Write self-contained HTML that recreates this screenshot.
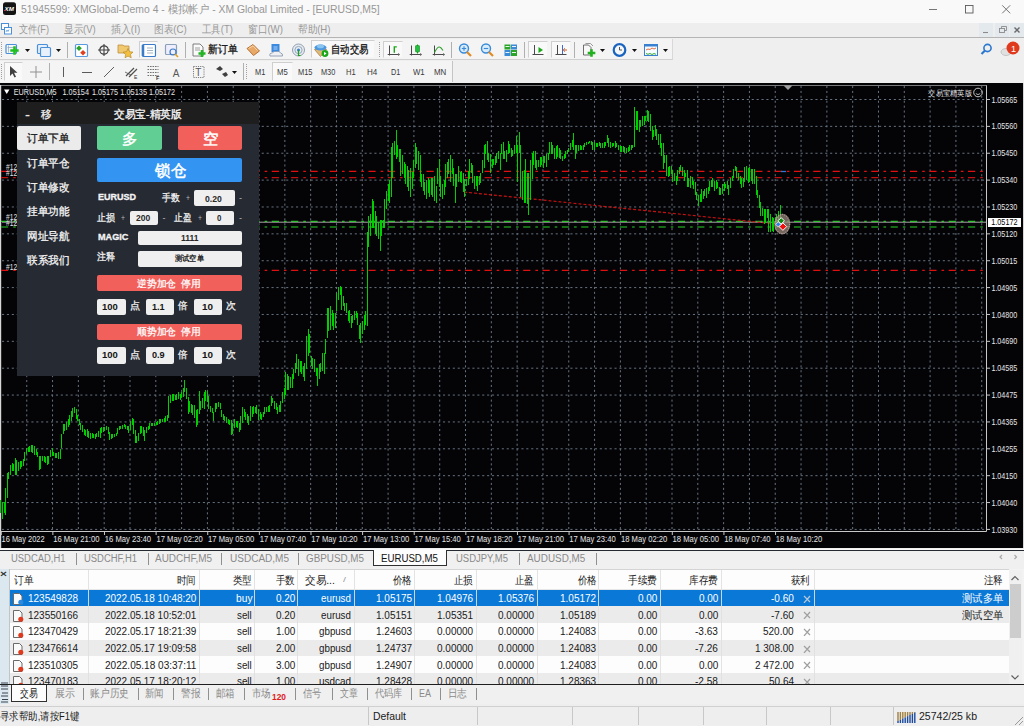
<!DOCTYPE html>
<html><head><meta charset="utf-8"><style>
*{margin:0;padding:0;box-sizing:border-box}
html,body{width:1024px;height:726px;overflow:hidden;background:#f0f0f0;font-family:"Liberation Sans",sans-serif;position:relative}
.a{position:absolute;white-space:nowrap}
.tx{position:absolute;white-space:nowrap;line-height:1;display:block}
.sep{position:absolute;width:1px;background:#b0b0b0}
.cts{position:absolute;top:553px;width:1px;height:12px;background:#909090}
.bts{position:absolute;top:688px;width:1px;height:12px;background:#909090}
.sts{position:absolute;top:707px;width:1px;height:18px;background:#c8c8c8}
</style></head><body>
<div class="a" style="left:0;top:0;width:1024px;height:22.5px;background:#f9f9f9"></div>
<svg class="a" style="left:0;top:0" width="24" height="20"><rect x="3" y="2.3" width="13" height="12.7" rx="2.5" fill="#141414"/><text x="4.6" y="11.2" font-size="6.2" font-style="italic" font-weight="bold" fill="#fff" font-family="Liberation Sans">XM</text><path d="M4.6 10.5h1.5" stroke="#e02020" stroke-width="1"/></svg>
<span id="t_0" class="tx" style="left:20.6px;top:4.12px;font-size:11px;color:#979797;font-weight:normal;transform:scaleX(0.9446);transform-origin:0 0;">51945599: XMGlobal-Demo 4 - 模拟帐户 - XM Global Limited - [EURUSD,M5]</span>
<svg class="a" style="left:920px;top:0" width="104" height="22"><path d="M9 9.5h8" stroke="#666" stroke-width=".9"/><rect x="45.5" y="5.5" width="7.5" height="7.5" fill="none" stroke="#5a5a5a" stroke-width=".9"/><path d="M82.2 5.3l8 8M90.2 5.3l-8 8" stroke="#666" stroke-width=".9"/></svg>
<div class="a" style="left:0;top:22.5px;width:1024px;height:15px;background:#eeeeee"></div>
<div class="a" style="left:0;top:37px;width:1024px;height:1px;background:#b4b4b4"></div>
<svg class="a" style="left:0;top:22px" width="14" height="14"><rect x="1.5" y="1.5" width="7" height="6" fill="#fff" stroke="#4a90d9" stroke-width="1"/><rect x="4.5" y="5.5" width="7" height="6.5" fill="#fff" stroke="#4a90d9" stroke-width="1"/><path d="M6 10l1-2 1 1.5 1-2" stroke="#4a90d9" stroke-width=".7" fill="none"/></svg>
<span id="t_1" class="tx" style="left:19.4px;top:24.12px;font-size:11px;color:#999999;font-weight:normal;transform:scaleX(0.8322);transform-origin:0 0;">文件(F)</span>
<span id="t_2" class="tx" style="left:64.4px;top:24.12px;font-size:11px;color:#999999;font-weight:normal;transform:scaleX(0.8671);transform-origin:0 0;">显示(V)</span>
<span id="t_3" class="tx" style="left:110.8px;top:24.12px;font-size:11px;color:#999999;font-weight:normal;transform:scaleX(0.9015);transform-origin:0 0;">插入(I)</span>
<span id="t_4" class="tx" style="left:154px;top:24.12px;font-size:11px;color:#999999;font-weight:normal;transform:scaleX(0.8771);transform-origin:0 0;">图表(C)</span>
<span id="t_5" class="tx" style="left:201.7px;top:24.12px;font-size:11px;color:#999999;font-weight:normal;transform:scaleX(0.8544);transform-origin:0 0;">工具(T)</span>
<span id="t_6" class="tx" style="left:247.5px;top:24.12px;font-size:11px;color:#999999;font-weight:normal;transform:scaleX(0.8812);transform-origin:0 0;">窗口(W)</span>
<span id="t_7" class="tx" style="left:297.5px;top:24.12px;font-size:11px;color:#999999;font-weight:normal;transform:scaleX(0.8718);transform-origin:0 0;">帮助(H)</span>
<div class="a" style="left:979px;top:23px;width:14px;height:14px;background:#e4e9ee"></div>
<div class="a" style="left:995px;top:23px;width:14px;height:14px;background:#e4e9ee"></div>
<div class="a" style="left:1010px;top:23px;width:14px;height:14px;background:#e4e9ee"></div>
<svg class="a" style="left:976px;top:22px" width="48" height="15"><path d="M7 10.5h5" stroke="#8a8a8a" stroke-width="1.1"/><rect x="23.5" y="6.5" width="5" height="4" fill="none" stroke="#8a8a8a" stroke-width=".9"/><path d="M25.5 6.5v-2h5v4h-2" fill="none" stroke="#8a8a8a" stroke-width=".9"/><path d="M38.5 5.5l5 5M43.5 5.5l-5 5" stroke="#6a6a6a" stroke-width="1.4"/></svg>
<div class="a" style="left:0;top:38px;width:1024px;height:45px;background:#efefef"></div>
<div class="a" style="left:0;top:39px;width:673px;height:21px;background:#f4f4f4;border-bottom:1px solid #d0d0d0;border-right:1px solid #d8d8d8"></div>
<div class="a" style="left:0;top:61px;width:453px;height:21px;background:#f4f4f4;border-right:1px solid #c4c4c4"></div>
<div class="a" style="left:0;top:82.5px;width:1024px;height:1.5px;background:#1e1e1e"></div>
<div class="a" style="left:1px;top:42px;width:2px;height:15px;border-left:1px dotted #a0a0a0"></div>
<div class="a" style="left:379px;top:42px;width:2px;height:15px;border-left:1px dotted #a0a0a0"></div>
<div class="a" style="left:1px;top:64px;width:2px;height:15px;border-left:1px dotted #a0a0a0"></div>
<div class="a" style="left:246px;top:64px;width:2px;height:15px;border-left:1px dotted #a0a0a0"></div>
<div class="a" style="left:139px;top:41px;width:19px;height:17px;border:1px solid #cfcfcf;border-right-color:#f4f4f4;border-bottom-color:#f4f4f4;background:#f9f9f9"></div>
<div class="a" style="left:383px;top:41px;width:20px;height:17px;border:1px solid #cfcfcf;border-right-color:#f4f4f4;border-bottom-color:#f4f4f4;background:#f9f9f9"></div>
<div class="a" style="left:528px;top:41px;width:20px;height:17px;border:1px solid #cfcfcf;border-right-color:#f4f4f4;border-bottom-color:#f4f4f4;background:#f9f9f9"></div>
<div class="a" style="left:551px;top:41px;width:20px;height:17px;border:1px solid #cfcfcf;border-right-color:#f4f4f4;border-bottom-color:#f4f4f4;background:#f9f9f9"></div>
<div class="a" style="left:311px;top:40px;width:64px;height:18px;border:1px solid #cfcfcf;border-right-color:#f4f4f4;border-bottom-color:#f4f4f4;background:#f9f9f9"></div>
<div class="a" style="left:4px;top:62px;width:19px;height:19px;border:1px solid #cfcfcf;border-right-color:#f4f4f4;border-bottom-color:#f4f4f4;background:#f9f9f9"></div>
<div class="a" style="left:272px;top:62px;width:21px;height:19px;border:1px solid #cfcfcf;border-right-color:#f4f4f4;border-bottom-color:#f4f4f4;background:#f9f9f9"></div>
<div class="sep" style="left:67px;top:42px;height:16px"></div>
<div class="sep" style="left:185px;top:42px;height:16px"></div>
<div class="sep" style="left:451px;top:42px;height:16px"></div>
<div class="sep" style="left:524px;top:42px;height:16px"></div>
<div class="sep" style="left:574px;top:42px;height:16px"></div>
<div class="sep" style="left:49px;top:63px;height:17px"></div>
<div class="sep" style="left:243px;top:63px;height:17px"></div>
<svg class="a" style="left:0;top:36px" width="680" height="48"><rect x="6.0" y="8.5" width="10.5" height="9" rx="1" fill="#f4f8fc" stroke="#4a90d9" stroke-width="1.2"/><path d="M7.5 11.5h7M8.5 9.5v7" stroke="#9ab" stroke-width=".8"/><path d="M10.3 14.5H18.7M14.5 10.3V18.7" stroke="#20c020" stroke-width="2.6"/><path d="M25 13h5l-2.5 3z" fill="#111"/><rect x="37.5" y="8.5" width="10" height="9" rx="1" fill="#e8f1fb" stroke="#4a90d9" stroke-width="1.2"/><rect x="40.5" y="11.5" width="10" height="9" rx="1" fill="#e8f1fb" stroke="#4a90d9" stroke-width="1.2"/><path d="M56 13h5l-2.5 3z" fill="#111"/><rect x="75.5" y="8.5" width="12" height="12" rx="1" fill="#fff" stroke="#5a9ae0" stroke-width="1.2"/><path d="M79 9.5l2.8 2.8-2.8 2.8-2.8-2.8z" fill="#2aa52a"/><path d="M83 14l2.8 2.8-2.8 2.8-2.8-2.8z" fill="#e04020"/><circle cx="104" cy="14" r="4.2" fill="none" stroke="#404040" stroke-width="1.2"/><path d="M98 14h12M104 8v12" stroke="#404040" stroke-width="1.1"/><path d="M118 9h5l1 1h5v7h-11z" fill="#f0c870" stroke="#c09040" stroke-width=".8"/><path d="M128 12.5l1.6 3.2 3.4.4-2.5 2.3.7 3.4-3.2-1.7-3 1.7.6-3.4-2.5-2.3 3.4-.4z" fill="#f2c040" stroke="#b08020" stroke-width=".6"/><rect x="142.5" y="8.5" width="13" height="12" rx="1" fill="#fff" stroke="#3a7bc8" stroke-width="1.2"/><path d="M143 9v11" stroke="#3a7bc8" stroke-width="2.5"/><path d="M147 12h6M147 14.5h6M147 17h6" stroke="#9ab" stroke-width=".9"/><rect x="165.5" y="8.5" width="11" height="10" rx="1" fill="#eef" stroke="#8aa0b8" stroke-width="1.2"/><circle cx="173" cy="16" r="3" fill="none" stroke="#3a7bc8" stroke-width="1.2"/><path d="M175 18l3 3" stroke="#e0a020" stroke-width="1.6"/><path d="M193 8h7l3 3v9h-10z" fill="#fafafa" stroke="#707070" stroke-width=".9"/><path d="M195 12h5M195 14h5" stroke="#888" stroke-width=".8"/><path d="M198.5 17.5H205.5M202 14.0V21.0" stroke="#22b422" stroke-width="2.6"/><path d="M247 12.5L253 8.5L259.5 15L253.5 19.5Z" fill="#e8a868" stroke="#b06a30" stroke-width=".9"/><path d="M248.5 12.5L253 9.799999999999997L257.5 14.5" stroke="#f8d8a8" stroke-width="1" fill="none"/><rect x="271.5" y="8" width="8" height="8" fill="#3a8ae0"/><path d="M273.5 11h4M273.5 13h4" stroke="#cfe4fa" stroke-width=".8"/><path d="M270 20q-1-3 2.5-3 q1-2.5 4-1.5 q3-1 4 1.5 q2.5.3 2 3z" fill="#eef0f4" stroke="#8090a8" stroke-width=".8"/><circle cx="298.5" cy="14" r="6" fill="#e8ecf0" stroke="#90a0b0" stroke-width="1"/><circle cx="298.5" cy="14" r="3.6" fill="none" stroke="#8aa0b8" stroke-width=".9"/><circle cx="298.5" cy="14" r="1.5" fill="#3a7ad0"/><path d="M298.5 14v5.5h2" stroke="#20a020" stroke-width="1.2" fill="none"/><path d="M314.5 13.5L320.5 20.5L326.5 13.5Z" fill="#e0b878" stroke="#a07840" stroke-width=".7"/><ellipse cx="320.5" cy="11.5" rx="6" ry="3" fill="#4a98e0"/><ellipse cx="320.5" cy="10.200000000000003" rx="3.5" ry="2" fill="#8cc4f0"/><circle cx="325" cy="17.5" r="3.4" fill="#18a818"/><path d="M324 15.799999999999997l2.6 1.7-2.6 1.7z" fill="#fff"/><path d="M387.7 18.5h10.5M389.5 9.5v10" stroke="#4a4a4a" stroke-width="1"/><path d="M398.2 17l1.8 1.5-1.8 1.5z" fill="#4a4a4a"/><path d="M409.7 18.5h10.5M411.5 9.5v10" stroke="#4a4a4a" stroke-width="1"/><path d="M420.2 17l1.8 1.5-1.8 1.5z" fill="#4a4a4a"/><path d="M432.7 18.5h10.5M434.5 9.5v10" stroke="#4a4a4a" stroke-width="1"/><path d="M443.2 17l1.8 1.5-1.8 1.5z" fill="#4a4a4a"/><path d="M394.3 10.200000000000003v6.5M394.3 10.899999999999999h2.5" stroke="#18a818" stroke-width="1.4"/><path d="M417.5 8.5v9" stroke="#18a018" stroke-width="1"/><rect x="415.5" y="9.5" width="4" height="6.5" rx=".8" fill="#20c040" stroke="#178a17" stroke-width=".6"/><path d="M434.5 16.5q3-6 5-5.5q1.5.3 3.5 3.5" stroke="#30a030" stroke-width="1.1" fill="none"/><circle cx="464" cy="12.5" r="4.5" fill="#d8ecfb" stroke="#3a8ad8" stroke-width="1.4"/><path d="M467 16l4 4" stroke="#e08a20" stroke-width="2.2"/><path d="M461.8 12.5h4.4" stroke="#3a8ad8" stroke-width="1.1"/><path d="M464 10.299999999999997v4.4" stroke="#3a8ad8" stroke-width="1.1"/><circle cx="486" cy="12.5" r="4.5" fill="#d8ecfb" stroke="#3a8ad8" stroke-width="1.4"/><path d="M489 16l4 4" stroke="#e08a20" stroke-width="2.2"/><path d="M483.8 12.5h4.4" stroke="#3a8ad8" stroke-width="1.1"/><rect x="504.5" y="8.5" width="6" height="5" fill="#2aa52a"/><rect x="511" y="8.5" width="6" height="5" fill="#3a8ad8"/><rect x="504.5" y="14" width="6" height="6" fill="#3a8ad8"/><rect x="511" y="14" width="6" height="6" fill="#2aa52a"/><path d="M505.5 10.5h4M512 10.5h4M505.5 16.5h4M512 16.5h4" stroke="#fff" stroke-width=".9"/><path d="M532.5 18.5h11M534.5 9v10" stroke="#4a4a4a" stroke-width="1"/><path d="M538.5 11l4.5 3-4.5 3z" fill="#18a818"/><path d="M555.5 18.5h11M557.5 9v10" stroke="#4a4a4a" stroke-width="1"/><path d="M562.5 9v9" stroke="#3a6ad8" stroke-width="1"/><path d="M567 14h-3.5M565 12.299999999999997l-1.8 1.7 1.8 1.7" stroke="#d06020" stroke-width="1" fill="none"/><path d="M583.5 9h5l2.5 2.5v7.5h-7.5z" fill="#f8f8f8" stroke="#606060" stroke-width=".9"/><path d="M585.5 7.5h5l2.5 2.5" stroke="#808080" stroke-width=".8" fill="none"/><path d="M587.7 17H595.3M591.5 13.2V20.8" stroke="#20b020" stroke-width="2.6"/><path d="M600 13h5l-2.5 3z" fill="#111"/><circle cx="619.5" cy="14" r="5.8" fill="#f4f8fc" stroke="#1a64c0" stroke-width="2.2"/><path d="M619.5 11v3h2.5" stroke="#444" stroke-width=".9" fill="none"/><path d="M632 13h5l-2.5 3z" fill="#111"/><rect x="644.5" y="8.5" width="13" height="11" fill="#f8fbff" stroke="#3a80d0" stroke-width="1"/><rect x="644.5" y="8.5" width="13" height="2" fill="#3a80d0"/><path d="M646 14l2-1 2 .5 2-1.5 2 1 2-1" stroke="#e06030" stroke-width=".9" fill="none"/><path d="M646 17.5l2 .8 2-.8 2 1 2-1 2 .8" stroke="#20a020" stroke-width=".9" fill="none"/><path d="M663 13h5l-2.5 3z" fill="#111"/><path d="M10 30v10l2.5-2.5 2 4 1.5-.7-2-4h3.5z" fill="#404040"/><path d="M30 36h12M36 30v12" stroke="#909090" stroke-width="1"/><path d="M63.5 31v10" stroke="#5a5a5a" stroke-width="1"/><path d="M82 36.5h10" stroke="#5a5a5a" stroke-width="1"/><path d="M104 41l10-10" stroke="#606060" stroke-width="1"/><path d="M126 40l8-8M129 41l8-8" stroke="#505050" stroke-width="1.2"/><path d="M125 36l6 3" stroke="#505050" stroke-width=".8"/><text x="134" y="43" font-size="5" fill="#333" font-family="Liberation Sans">E</text><path d="M147.5 30.5h11M147.5 33.5h11M147.5 36.5h11M147.5 39.5h11" stroke="#707070" stroke-width="1" stroke-dasharray="1.6 .9"/><text x="156" y="44" font-size="5.5" font-weight="bold" fill="#333" font-family="Liberation Sans">F</text><text x="172.8" y="40.5" font-size="10" fill="#585858" font-family="Liberation Sans">A</text><rect x="193.5" y="30.5" width="10.5" height="11" fill="none" stroke="#707070" stroke-width=".9" stroke-dasharray="1.2 1"/><text x="195.3" y="40.3" font-size="10" fill="#585858" font-family="Liberation Sans">T</text><path d="M216 33l4-3 3 3-3 2zM222 38l4-2 2 3-3 2z" fill="#404040"/><path d="M232 35h5l-2.5 3z" fill="#111"/></svg>
<span id="t_8" class="tx" style="left:207.8px;top:43.52px;font-size:11px;color:#111;font-weight:normal;transform:scaleX(0.8909);transform-origin:0 0;-webkit-text-stroke:.3px #111;">新订单</span>
<span id="t_9" class="tx" style="left:331px;top:43.52px;font-size:11px;color:#111;font-weight:normal;transform:scaleX(0.8523);transform-origin:0 0;-webkit-text-stroke:.3px #111;">自动交易</span>
<span id="t_10" class="tx" style="left:254.5px;top:67.92px;font-size:8.5px;color:#3a3a3a;font-weight:normal;transform:scaleX(0.8720);transform-origin:0 0;">M1</span>
<span id="t_11" class="tx" style="left:276.6px;top:67.92px;font-size:8.5px;color:#3a3a3a;font-weight:normal;transform:scaleX(0.9058);transform-origin:0 0;">M5</span>
<span id="t_12" class="tx" style="left:297.8px;top:67.92px;font-size:8.5px;color:#3a3a3a;font-weight:normal;transform:scaleX(0.8763);transform-origin:0 0;">M15</span>
<span id="t_13" class="tx" style="left:320.7px;top:67.92px;font-size:8.5px;color:#3a3a3a;font-weight:normal;transform:scaleX(0.8642);transform-origin:0 0;">M30</span>
<span id="t_14" class="tx" style="left:345.7px;top:67.92px;font-size:8.5px;color:#3a3a3a;font-weight:normal;transform:scaleX(0.8920);transform-origin:0 0;">H1</span>
<span id="t_15" class="tx" style="left:367px;top:67.92px;font-size:8.5px;color:#3a3a3a;font-weight:normal;transform:scaleX(0.9471);transform-origin:0 0;">H4</span>
<span id="t_16" class="tx" style="left:391px;top:67.92px;font-size:8.5px;color:#3a3a3a;font-weight:normal;transform:scaleX(0.8552);transform-origin:0 0;">D1</span>
<span id="t_17" class="tx" style="left:413px;top:67.92px;font-size:8.5px;color:#3a3a3a;font-weight:normal;transform:scaleX(0.9176);transform-origin:0 0;">W1</span>
<span id="t_18" class="tx" style="left:434px;top:67.92px;font-size:8.5px;color:#3a3a3a;font-weight:normal;transform:scaleX(0.9294);transform-origin:0 0;">MN</span>
<svg class="a" style="left:975px;top:38px" width="49" height="22"><circle cx="12.5" cy="10" r="3.6" fill="none" stroke="#2a78d0" stroke-width="1.6"/><path d="M10 12.5l-3.5 3.5" stroke="#2a78d0" stroke-width="2.2"/><ellipse cx="31" cy="14" rx="5" ry="3.5" fill="#e0e0e0" stroke="#bbb" stroke-width=".8"/><circle cx="38" cy="10" r="6.5" fill="#e03a1e"/><text x="36" y="13.5" font-size="9" fill="#fff" font-family="Liberation Sans">1</text></svg>
<svg class="a" width="1024" height="466" style="left:0;top:83px">
<rect x="0" y="0" width="1024" height="466" fill="#040407"/>
<rect x="1023" y="0" width="1" height="466" fill="#d8d8d8"/>
<path d="M26.75 3 V448 M52.56 3 V448 M78.37 3 V448 M104.18 3 V448 M129.99 3 V448 M155.80 3 V448 M181.61 3 V448 M207.42 3 V448 M233.23 3 V448 M259.04 3 V448 M284.85 3 V448 M310.66 3 V448 M336.47 3 V448 M362.28 3 V448 M388.09 3 V448 M413.90 3 V448 M439.71 3 V448 M465.52 3 V448 M491.33 3 V448 M517.14 3 V448 M542.95 3 V448 M568.76 3 V448 M594.57 3 V448 M620.38 3 V448 M646.19 3 V448 M672.00 3 V448 M697.81 3 V448 M723.62 3 V448 M749.43 3 V448 M775.24 3 V448 M801.05 3 V448 M826.86 3 V448 M852.67 3 V448 M878.48 3 V448 M904.29 3 V448 M930.10 3 V448 M955.91 3 V448 M981.72 3 V448 M2 16.50 H985 M2 43.37 H985 M2 70.24 H985 M2 97.11 H985 M2 123.98 H985 M2 150.85 H985 M2 177.72 H985 M2 204.59 H985 M2 231.46 H985 M2 258.33 H985 M2 285.20 H985 M2 312.07 H985 M2 338.94 H985 M2 365.81 H985 M2 392.68 H985 M2 419.55 H985 M2 446.42 H985" stroke="#66727f" stroke-width="1" stroke-dasharray="2.1 2.8" fill="none"/>
<path d="M1 2.5 H986.5 V448.5 H1" stroke="#c8c8c8" stroke-width="1" fill="none"/>
<path d="M1 2.5 H986" stroke="#7a7a7a" stroke-width="1" fill="none"/>
<rect x="0" y="2" width="1.2" height="463" fill="#d8d8d8"/>
<path d="M1 88.4 H985" stroke="#e01010" stroke-width="1.3" stroke-dasharray="7.2 5 2.6 4.54" fill="none"/>
<path d="M1 94.6 H985" stroke="#c01010" stroke-width="1.3" stroke-dasharray="7.2 5 2.6 4.54" fill="none"/>
<path d="M1 187.3 H985" stroke="#e01010" stroke-width="1.3" stroke-dasharray="7.2 5 2.6 4.54" fill="none"/>
<path d="M2 139.2 H986" stroke="#a8a8a8" stroke-width="1" fill="none"/>
<path d="M1 138.4 H985" stroke="#30c030" stroke-width="1.2" stroke-dasharray="7.2 5 2.6 4.54" fill="none"/>
<path d="M1 144.0 H985" stroke="#1c8c1c" stroke-width="1.3" stroke-dasharray="7.2 5 2.6 4.54" fill="none"/>
<path d="M464 109 L776 141" stroke="#c81010" stroke-width="1.2" stroke-dasharray="3 2" fill="none"/>
<path d="M0.5 417V430M2.5 419V436M4.5 419V430M5.5 405V432M7.5 390V415M8.5 389V396M10.5 382V392M12.5 380V388M13.5 381V388M15.5 375V392M16.5 377V392M18.5 379V388M20.5 378V386M21.5 378V384M23.5 376V383M24.5 369V378M26.5 365V371M28.5 364V369M29.5 363V369M31.5 362V369M32.5 362V370M34.5 363V372M36.5 366V372M37.5 369V374M39.5 373V387M40.5 373V386M42.5 373V378M44.5 373V379M45.5 374V380M47.5 373V382M48.5 373V381M50.5 367V374M52.5 365V373M53.5 369V373M55.5 370V375M56.5 370V375M58.5 369V376M60.5 366V376M61.5 351V365M63.5 341V351M64.5 341V348M66.5 339V347M68.5 336V344M69.5 332V342M71.5 328V338M72.5 325V334M74.5 324V330M76.5 326V336M77.5 332V338M79.5 336V342M80.5 340V347M82.5 342V349M84.5 346V352M85.5 347V353M87.5 346V354M88.5 348V355M90.5 350V356M92.5 350V355M93.5 351V355M95.5 351V356M96.5 350V354M98.5 348V354M100.5 345V355M101.5 344V350M103.5 344V349M104.5 344V348M106.5 343V347M108.5 344V351M109.5 349V357M111.5 351V356M112.5 351V355M114.5 351V354M116.5 350V353M117.5 345V351M119.5 343V347M120.5 343V346M122.5 342V346M124.5 341V344M125.5 342V346M127.5 343V347M128.5 343V350M130.5 338V347M132.5 335V342M133.5 336V351M135.5 347V360M136.5 353V360M138.5 350V358M140.5 343V351M141.5 343V350M143.5 344V353M144.5 347V358M146.5 344V350M148.5 343V347M149.5 340V346M151.5 340V343M152.5 340V343M154.5 340V343M156.5 339V342M157.5 338V342M159.5 336V341M160.5 336V340M162.5 336V339M164.5 335V339M165.5 333V339M167.5 332V338M168.5 313V335M170.5 312V320M172.5 311V318M173.5 311V318M175.5 312V317M176.5 311V317M178.5 309V316M180.5 311V317M181.5 309V315M183.5 305V314M184.5 297V309M186.5 305V316M188.5 314V331M189.5 318V329M191.5 321V330M192.5 322V332M194.5 322V335M196.5 327V344M197.5 326V342M199.5 308V331M200.5 318V327M202.5 315V325M204.5 309V326M205.5 307V318M207.5 308V319M208.5 313V326M210.5 323V329M212.5 325V330M213.5 329V338M215.5 320V329M216.5 320V326M218.5 319V324M220.5 320V326M221.5 327V334M223.5 331V337M224.5 333V338M226.5 334V340M228.5 336V341M229.5 337V342M231.5 337V352M232.5 340V351M234.5 336V345M236.5 338V344M237.5 338V345M239.5 340V349M240.5 333V347M242.5 324V340M244.5 326V334M245.5 329V337M247.5 331V340M248.5 333V342M250.5 323V338M252.5 324V334M253.5 323V331M255.5 324V330M256.5 322V331M258.5 326V337M260.5 329V336M261.5 331V337M263.5 329V334M264.5 324V331M266.5 324V329M268.5 323V329M269.5 322V329M271.5 313V323M272.5 315V320M274.5 318V326M276.5 320V327M277.5 324V331M279.5 322V329M280.5 318V329M282.5 309V320M284.5 305V316M285.5 289V312M287.5 291V307M288.5 293V307M290.5 294V305M292.5 291V305M293.5 286V296M295.5 280V290M296.5 271V286M298.5 276V293M300.5 278V289M301.5 278V291M303.5 283V294M304.5 280V298M306.5 253V286M308.5 246V273M309.5 251V270M311.5 273V283M312.5 275V286M314.5 276V289M316.5 285V293M317.5 285V303M319.5 281V296M320.5 280V289M322.5 270V288M324.5 270V291M325.5 256V271M327.5 225V255M328.5 225V248M330.5 223V247M332.5 227V243M333.5 230V247M335.5 230V245M336.5 210V228M338.5 204V217M340.5 203V212M341.5 204V227M343.5 213V223M344.5 220V228M346.5 220V230M348.5 228V238M349.5 227V240M351.5 233V245M352.5 232V240M354.5 228V237M356.5 228V235M357.5 230V242M359.5 242V256M360.5 240V260M362.5 238V251M364.5 232V247M365.5 228V242M367.5 149V243M368.5 133V164M370.5 131V153M372.5 116V145M373.5 118V145M375.5 128V151M376.5 133V153M378.5 139V156M380.5 137V168M381.5 137V153M383.5 137V145M384.5 116V145M386.5 108V126M388.5 101V118M389.5 97V120M391.5 64V114M392.5 60V95M394.5 58V72M396.5 47V76M397.5 62V74M399.5 66V79M400.5 66V93M402.5 72V91M404.5 79V95M405.5 81V101M407.5 83V104M408.5 87V108M410.5 85V114M412.5 89V106M413.5 77V95M415.5 60V85M416.5 64V81M418.5 68V87M420.5 72V99M421.5 91V104M423.5 91V108M424.5 99V112M426.5 97V116M428.5 95V110M429.5 97V114M431.5 95V112M432.5 95V114M434.5 93V118M436.5 103V120M437.5 85V101M439.5 76V104M440.5 93V114M442.5 101V116M444.5 97V112M445.5 81V104M447.5 79V95M448.5 76V91M450.5 72V99M452.5 76V91M453.5 85V103M455.5 91V120M456.5 91V104M458.5 83V99M460.5 89V99M461.5 88V100M463.5 90V109M464.5 96V114M466.5 96V103M468.5 88V102M469.5 76V96M471.5 80V90M472.5 82V100M474.5 93V106M476.5 93V103M477.5 93V108M479.5 93V102M480.5 90V100M482.5 77V90M484.5 62V85M485.5 61V71M487.5 58V77M488.5 70V79M490.5 71V90M492.5 76V85M493.5 76V82M495.5 73V82M496.5 70V80M498.5 68V76M500.5 70V87M501.5 61V71M503.5 59V76M504.5 68V76M506.5 67V79M508.5 58V71M509.5 61V70M511.5 65V74M512.5 67V73M514.5 62V71M516.5 53V70M517.5 62V99M519.5 49V70M520.5 62V114M522.5 88V117M524.5 87V120M525.5 76V120M527.5 90V121M528.5 90V132M530.5 77V117M532.5 70V96M533.5 68V82M535.5 68V85M536.5 77V87M538.5 77V84M540.5 74V84M541.5 74V82M543.5 73V85M544.5 73V80M546.5 71V84M548.5 70V77M549.5 59V71M551.5 59V71M552.5 62V71M554.5 65V76M556.5 63V76M557.5 62V74M559.5 65V75M560.5 67V76M562.5 73V78M564.5 71V76M565.5 68V75M567.5 67V71M568.5 65V69M570.5 60V67M572.5 57V64M573.5 50V67M575.5 62V76M576.5 62V70M578.5 62V68M580.5 62V67M581.5 63V67M583.5 62V67M584.5 60V64M586.5 59V62M588.5 59V61M589.5 58V60M591.5 58V62M592.5 59V67M594.5 59V67M596.5 60V64M597.5 60V64M599.5 59V63M600.5 60V65M602.5 60V65M604.5 59V65M605.5 59V63M607.5 52V60M608.5 55V64M610.5 59V65M612.5 60V64M613.5 60V63M615.5 58V65M616.5 60V64M618.5 62V67M620.5 63V69M621.5 63V69M623.5 63V69M624.5 64V70M626.5 65V70M628.5 64V69M629.5 62V68M631.5 62V67M632.5 62V65M634.5 24V64M636.5 28V47M637.5 28V47M639.5 37V49M640.5 37V44M642.5 33V43M644.5 33V42M645.5 33V38M647.5 27V38M648.5 28V39M650.5 31V48M652.5 43V57M653.5 47V54M655.5 42V53M656.5 46V57M658.5 51V62M660.5 51V65M661.5 60V73M663.5 60V86M664.5 72V80M666.5 72V93M668.5 84V94M669.5 83V93M671.5 83V91M672.5 87V99M674.5 90V98M676.5 93V102M677.5 87V98M679.5 84V91M680.5 82V88M682.5 84V93M684.5 87V98M685.5 90V94M687.5 87V104M688.5 95V104M690.5 93V105M692.5 94V102M693.5 98V106M695.5 99V112M696.5 109V117M698.5 112V123M700.5 111V119M701.5 106V119M703.5 108V116M704.5 106V113M706.5 105V115M708.5 104V111M709.5 98V108M711.5 97V104M712.5 95V104M714.5 98V108M716.5 97V106M717.5 99V105M719.5 104V112M720.5 105V112M722.5 101V111M724.5 99V108M725.5 101V105M727.5 98V106M728.5 102V112M730.5 95V105M732.5 93V98M733.5 86V95M735.5 83V88M736.5 84V95M738.5 90V97M740.5 93V101M741.5 95V105M743.5 95V104M744.5 84V99M746.5 83V97M748.5 85V100M749.5 84V99M751.5 86V98M752.5 86V101M754.5 86V101M756.5 93V112M757.5 107V115M759.5 112V125M760.5 119V133M762.5 125V133M764.5 126V141M765.5 126V140M767.5 126V135M768.5 126V149M770.5 131V149M772.5 134V148M773.5 135V149M775.5 134V142M776.5 131V140M778.5 128V138M780.5 122V138" stroke="#00d000" stroke-width="1" fill="none" shape-rendering="crispEdges"/>
<path d="M987 16.50H990M987 43.37H990M987 70.24H990M987 97.11H990M987 123.98H990M987 150.85H990M987 177.72H990M987 204.59H990M987 231.46H990M987 258.33H990M987 285.20H990M987 312.07H990M987 338.94H990M987 365.81H990M987 392.68H990M987 419.55H990M987 446.42H990" stroke="#c8c8c8" stroke-width="1" fill="none"/>
<text x="991.4" y="19.61" textLength="25.90" lengthAdjust="spacingAndGlyphs" font-size="8.6" fill="#e6e6e6" font-family="Liberation Sans" >1.05665</text>
<text x="991.4" y="46.48" textLength="25.90" lengthAdjust="spacingAndGlyphs" font-size="8.6" fill="#e6e6e6" font-family="Liberation Sans" >1.05560</text>
<text x="991.4" y="73.35" textLength="25.90" lengthAdjust="spacingAndGlyphs" font-size="8.6" fill="#e6e6e6" font-family="Liberation Sans" >1.05450</text>
<text x="991.4" y="100.22" textLength="25.90" lengthAdjust="spacingAndGlyphs" font-size="8.6" fill="#e6e6e6" font-family="Liberation Sans" >1.05340</text>
<text x="991.4" y="127.09" textLength="25.90" lengthAdjust="spacingAndGlyphs" font-size="8.6" fill="#e6e6e6" font-family="Liberation Sans" >1.05230</text>
<text x="991.4" y="153.96" textLength="25.90" lengthAdjust="spacingAndGlyphs" font-size="8.6" fill="#e6e6e6" font-family="Liberation Sans" >1.05120</text>
<text x="991.4" y="180.83" textLength="25.90" lengthAdjust="spacingAndGlyphs" font-size="8.6" fill="#e6e6e6" font-family="Liberation Sans" >1.05015</text>
<text x="991.4" y="207.70" textLength="25.90" lengthAdjust="spacingAndGlyphs" font-size="8.6" fill="#e6e6e6" font-family="Liberation Sans" >1.04905</text>
<text x="991.4" y="234.57" textLength="25.90" lengthAdjust="spacingAndGlyphs" font-size="8.6" fill="#e6e6e6" font-family="Liberation Sans" >1.04800</text>
<text x="991.4" y="261.44" textLength="25.90" lengthAdjust="spacingAndGlyphs" font-size="8.6" fill="#e6e6e6" font-family="Liberation Sans" >1.04690</text>
<text x="991.4" y="288.31" textLength="25.90" lengthAdjust="spacingAndGlyphs" font-size="8.6" fill="#e6e6e6" font-family="Liberation Sans" >1.04585</text>
<text x="991.4" y="315.18" textLength="25.90" lengthAdjust="spacingAndGlyphs" font-size="8.6" fill="#e6e6e6" font-family="Liberation Sans" >1.04475</text>
<text x="991.4" y="342.05" textLength="25.90" lengthAdjust="spacingAndGlyphs" font-size="8.6" fill="#e6e6e6" font-family="Liberation Sans" >1.04365</text>
<text x="991.4" y="368.92" textLength="25.90" lengthAdjust="spacingAndGlyphs" font-size="8.6" fill="#e6e6e6" font-family="Liberation Sans" >1.04255</text>
<text x="991.4" y="395.79" textLength="25.90" lengthAdjust="spacingAndGlyphs" font-size="8.6" fill="#e6e6e6" font-family="Liberation Sans" >1.04150</text>
<text x="991.4" y="422.66" textLength="25.90" lengthAdjust="spacingAndGlyphs" font-size="8.6" fill="#e6e6e6" font-family="Liberation Sans" >1.04040</text>
<text x="991.4" y="449.53" textLength="25.90" lengthAdjust="spacingAndGlyphs" font-size="8.6" fill="#e6e6e6" font-family="Liberation Sans" >1.03930</text>
<rect x="988" y="135" width="33" height="9" fill="#fff"/>
<text x="991.3" y="142.31" textLength="26.20" lengthAdjust="spacingAndGlyphs" font-size="8.6" fill="#000" font-family="Liberation Sans" >1.05172</text>
<text x="1.55" y="459.41" textLength="43.00" lengthAdjust="spacingAndGlyphs" font-size="8.6" fill="#e6e6e6" font-family="Liberation Sans" >16 May 2022</text>
<text x="53.17" y="459.41" textLength="46.30" lengthAdjust="spacingAndGlyphs" font-size="8.6" fill="#e6e6e6" font-family="Liberation Sans" >16 May 21:00</text>
<text x="104.79" y="459.41" textLength="46.30" lengthAdjust="spacingAndGlyphs" font-size="8.6" fill="#e6e6e6" font-family="Liberation Sans" >16 May 23:40</text>
<text x="156.41" y="459.41" textLength="46.30" lengthAdjust="spacingAndGlyphs" font-size="8.6" fill="#e6e6e6" font-family="Liberation Sans" >17 May 02:20</text>
<text x="208.03" y="459.41" textLength="46.30" lengthAdjust="spacingAndGlyphs" font-size="8.6" fill="#e6e6e6" font-family="Liberation Sans" >17 May 05:00</text>
<text x="259.65" y="459.41" textLength="46.30" lengthAdjust="spacingAndGlyphs" font-size="8.6" fill="#e6e6e6" font-family="Liberation Sans" >17 May 07:40</text>
<text x="311.27" y="459.41" textLength="46.30" lengthAdjust="spacingAndGlyphs" font-size="8.6" fill="#e6e6e6" font-family="Liberation Sans" >17 May 10:20</text>
<text x="362.89" y="459.41" textLength="46.30" lengthAdjust="spacingAndGlyphs" font-size="8.6" fill="#e6e6e6" font-family="Liberation Sans" >17 May 13:00</text>
<text x="414.51" y="459.41" textLength="46.30" lengthAdjust="spacingAndGlyphs" font-size="8.6" fill="#e6e6e6" font-family="Liberation Sans" >17 May 15:40</text>
<text x="466.13" y="459.41" textLength="46.30" lengthAdjust="spacingAndGlyphs" font-size="8.6" fill="#e6e6e6" font-family="Liberation Sans" >17 May 18:20</text>
<text x="517.75" y="459.41" textLength="46.30" lengthAdjust="spacingAndGlyphs" font-size="8.6" fill="#e6e6e6" font-family="Liberation Sans" >17 May 21:00</text>
<text x="569.37" y="459.41" textLength="46.30" lengthAdjust="spacingAndGlyphs" font-size="8.6" fill="#e6e6e6" font-family="Liberation Sans" >17 May 23:40</text>
<text x="620.99" y="459.41" textLength="46.30" lengthAdjust="spacingAndGlyphs" font-size="8.6" fill="#e6e6e6" font-family="Liberation Sans" >18 May 02:20</text>
<text x="672.61" y="459.41" textLength="46.30" lengthAdjust="spacingAndGlyphs" font-size="8.6" fill="#e6e6e6" font-family="Liberation Sans" >18 May 05:00</text>
<text x="724.23" y="459.41" textLength="46.30" lengthAdjust="spacingAndGlyphs" font-size="8.6" fill="#e6e6e6" font-family="Liberation Sans" >18 May 07:40</text>
<text x="775.85" y="459.41" textLength="46.30" lengthAdjust="spacingAndGlyphs" font-size="8.6" fill="#e6e6e6" font-family="Liberation Sans" >18 May 10:20</text>
<path d="M1.25 448V452M52.87 448V452M104.49 448V452M156.11 448V452M207.73 448V452M259.35 448V452M310.97 448V452M362.59 448V452M414.21 448V452M465.83 448V452M517.45 448V452M569.07 448V452M620.69 448V452M672.31 448V452M723.93 448V452M775.55 448V452" stroke="#c8c8c8" stroke-width="1" fill="none"/>
<path d="M4 6.5 L9.5 6.5 L6.75 11 Z" fill="#fff"/>
<text x="13.7" y="12.01" textLength="42.90" lengthAdjust="spacingAndGlyphs" font-size="8.6" fill="#e6e6e6" font-family="Liberation Sans" >EURUSD,M5</text>
<text x="62.5" y="12.01" textLength="26.50" lengthAdjust="spacingAndGlyphs" font-size="8.6" fill="#e6e6e6" font-family="Liberation Sans" >1.05154</text>
<text x="92" y="12.01" textLength="26.00" lengthAdjust="spacingAndGlyphs" font-size="8.6" fill="#e6e6e6" font-family="Liberation Sans" >1.05175</text>
<text x="120.3" y="12.01" textLength="26.70" lengthAdjust="spacingAndGlyphs" font-size="8.6" fill="#e6e6e6" font-family="Liberation Sans" >1.05135</text>
<text x="149" y="12.01" textLength="26.00" lengthAdjust="spacingAndGlyphs" font-size="8.6" fill="#e6e6e6" font-family="Liberation Sans" >1.05172</text>
<text x="928.4" y="12.70" textLength="43.50" lengthAdjust="spacingAndGlyphs" font-size="8" fill="#e8e8e8" font-family="Liberation Sans" >交易宝精英版</text>
<circle cx="978" cy="9.5" r="4.3" stroke="#ddd" stroke-width="0.9" fill="none"/><path d="M976 8.5h.1M980 8.5h.1" stroke="#ddd" stroke-width="1.2"/><path d="M975.8 10.599999999999994q2.2 2 4.4 0" stroke="#ddd" stroke-width=".8" fill="none"/>
<text x="6" y="87.11" textLength="37.00" lengthAdjust="spacingAndGlyphs" font-size="8.6" fill="#e0e0e0" font-family="Liberation Sans" >#123549828</text>
<text x="6" y="93.11" textLength="37.00" lengthAdjust="spacingAndGlyphs" font-size="8.6" fill="#e0e0e0" font-family="Liberation Sans" >#123549828</text>
<text x="6" y="137.11" textLength="37.00" lengthAdjust="spacingAndGlyphs" font-size="8.6" fill="#e0e0e0" font-family="Liberation Sans" >#123549828</text>
<text x="6" y="142.71" textLength="37.00" lengthAdjust="spacingAndGlyphs" font-size="8.6" fill="#e0e0e0" font-family="Liberation Sans" >#123549828</text>
<text x="6" y="186.61" textLength="37.00" lengthAdjust="spacingAndGlyphs" font-size="8.6" fill="#e0e0e0" font-family="Liberation Sans" >#123549828</text>
<ellipse cx="782.3" cy="141" rx="8" ry="10.3" fill="#a08a80" opacity=".72"/>
<ellipse cx="782.3" cy="141" rx="7.3" ry="9.6" fill="none" stroke="#c0b0a8" stroke-width="1.2" stroke-dasharray="1 1.2" opacity=".8"/>
<path d="M781.2 134.6 l3.2 3.2 l-3.2 3.2 l-3.2 -3.2z" fill="#108a10" stroke="#fff" stroke-width="1"/>
<path d="M782.9 139.8 l3.8 3.8 l-3.8 3.8 l-3.8 -3.8z" fill="#f01010" stroke="#fff" stroke-width="1"/>
<path d="M778.3 138.8 l2.6 2.6 l-2.6 2.6 l-2.6 -2.6z" fill="#3080e0" stroke="#fff" stroke-width=".7"/>
<path d="M781 88.5H786" stroke="#2a7ad8" stroke-width="1.3"/>
<path d="M783.5 2.5h9l-4.5 4.5z" fill="#a0a0a0"/>
</svg>
<div class="a" style="left:17px;top:102px;width:242px;height:274px;background:#262a33"></div>
<div class="a" style="left:17px;top:102px;width:242px;height:22px;background:#1f1e1f"></div>
<span id="t_19" class="tx" style="left:25px;top:108.52px;font-size:11px;color:#e8e8e8;font-weight:bold;transform:scaleX(1.3617);transform-origin:0 0;">-</span>
<span id="t_20" class="tx" style="left:41px;top:108.52px;font-size:11px;color:#f0f0f0;font-weight:normal;transform:scaleX(0.9636);transform-origin:0 0;-webkit-text-stroke:.3px #f0f0f0;">移</span>
<span id="t_21" class="tx" style="left:113.7px;top:108.72px;font-size:11px;color:#f4f4f4;font-weight:normal;transform:scaleX(0.9717);transform-origin:0 0;-webkit-text-stroke:.35px #f4f4f4;">交易宝-精英版</span>
<div class="a" style="left:17.3px;top:126px;width:64px;height:24px;background:#ebebeb;border-radius:2px"></div>
<span id="t_22" class="tx" style="left:27.2px;top:132.72px;font-size:11px;color:#1a1a1a;font-weight:normal;transform:scaleX(0.9591);transform-origin:0 0;-webkit-text-stroke:.3px #1a1a1a;">订单下单</span>
<span id="t_23" class="tx" style="left:27.2px;top:157.92px;font-size:11px;color:#f4f4f4;font-weight:normal;transform:scaleX(0.9591);transform-origin:0 0;-webkit-text-stroke:.3px #f4f4f4;">订单平仓</span>
<span id="t_24" class="tx" style="left:27.2px;top:181.92px;font-size:11px;color:#f4f4f4;font-weight:normal;transform:scaleX(0.9591);transform-origin:0 0;-webkit-text-stroke:.3px #f4f4f4;">订单修改</span>
<span id="t_25" class="tx" style="left:27.2px;top:205.92px;font-size:11px;color:#f4f4f4;font-weight:normal;transform:scaleX(0.9591);transform-origin:0 0;-webkit-text-stroke:.3px #f4f4f4;">挂单功能</span>
<span id="t_26" class="tx" style="left:27.2px;top:230.72px;font-size:11px;color:#f4f4f4;font-weight:normal;transform:scaleX(0.9591);transform-origin:0 0;-webkit-text-stroke:.3px #f4f4f4;">网址导航</span>
<span id="t_27" class="tx" style="left:27.2px;top:254.72px;font-size:11px;color:#f4f4f4;font-weight:normal;transform:scaleX(0.9591);transform-origin:0 0;-webkit-text-stroke:.3px #f4f4f4;">联系我们</span>
<div class="a" style="left:97.4px;top:126px;width:64.6px;height:23.80000000000001px;background:#61cf94;border-radius:2px"></div>
<div class="a" style="left:178.2px;top:126px;width:64.30000000000001px;height:23.80000000000001px;background:#f2605c;border-radius:2px"></div>
<div class="a" style="left:97.4px;top:158px;width:145.1px;height:23.80000000000001px;background:#3394f2;border-radius:2px"></div>
<span id="t_28" class="tx" style="left:122px;top:130.80px;font-size:15px;color:#fff;font-weight:normal;transform:scaleX(1.0333);transform-origin:0 0;-webkit-text-stroke:.5px #fff;">多</span>
<span id="t_29" class="tx" style="left:203px;top:130.80px;font-size:15px;color:#fff;font-weight:normal;transform:scaleX(1.0333);transform-origin:0 0;-webkit-text-stroke:.5px #fff;">空</span>
<span id="t_30" class="tx" style="left:154.5px;top:162.56px;font-size:15.5px;color:#fff;font-weight:normal;transform:scaleX(0.9688);transform-origin:0 0;-webkit-text-stroke:.5px #fff;">锁仓</span>
<span id="t_31" class="tx" style="left:98px;top:192.78px;font-size:8.8px;color:#f4f4f4;font-weight:bold;transform:scaleX(1.0227);transform-origin:0 0;-webkit-text-stroke:.3px #f4f4f4;">EURUSD</span>
<span id="t_32" class="tx" style="left:162px;top:192.50px;font-size:10px;color:#f0f0f0;font-weight:normal;transform:scaleX(0.8800);transform-origin:0 0;-webkit-text-stroke:.3px #f0f0f0;">手数</span>
<span id="t_33" class="tx" style="left:186px;top:193.68px;font-size:9px;color:#bbb;font-weight:normal;transform:scaleX(0.7596);transform-origin:0 0;">+</span>
<div class="a" style="left:194px;top:190.3px;width:40.5px;height:16.099999999999994px;background:#efefef;border-radius:2px"></div>
<span id="t_34" class="tx" style="left:204.8px;top:194.78px;font-size:8.8px;color:#2a2a2a;font-weight:bold;transform:scaleX(0.9810);transform-origin:0 0;">0.20</span>
<span id="t_35" class="tx" style="left:239px;top:193.68px;font-size:9px;color:#bbb;font-weight:normal;transform:scaleX(1.0000);transform-origin:0 0;">-</span>
<span id="t_36" class="tx" style="left:97.4px;top:212.70px;font-size:10px;color:#f0f0f0;font-weight:normal;transform:scaleX(0.9050);transform-origin:0 0;-webkit-text-stroke:.3px #f0f0f0;">止损</span>
<span id="t_37" class="tx" style="left:121px;top:213.68px;font-size:9px;color:#bbb;font-weight:normal;transform:scaleX(0.7596);transform-origin:0 0;">+</span>
<div class="a" style="left:130px;top:210.5px;width:27.69999999999999px;height:14.0px;background:#efefef;border-radius:2px"></div>
<span id="t_38" class="tx" style="left:135.7px;top:213.78px;font-size:8.8px;color:#2a2a2a;font-weight:bold;transform:scaleX(0.9668);transform-origin:0 0;">200</span>
<span id="t_39" class="tx" style="left:162.5px;top:213.68px;font-size:9px;color:#bbb;font-weight:normal;transform:scaleX(1.0000);transform-origin:0 0;">-</span>
<span id="t_40" class="tx" style="left:174.4px;top:212.70px;font-size:10px;color:#f0f0f0;font-weight:normal;transform:scaleX(0.8800);transform-origin:0 0;-webkit-text-stroke:.3px #f0f0f0;">止盈</span>
<span id="t_41" class="tx" style="left:198px;top:213.68px;font-size:9px;color:#bbb;font-weight:normal;transform:scaleX(0.7596);transform-origin:0 0;">+</span>
<div class="a" style="left:206.3px;top:210.5px;width:28.19999999999999px;height:14.0px;background:#efefef;border-radius:2px"></div>
<span id="t_42" class="tx" style="left:216.8px;top:213.78px;font-size:8.8px;color:#2a2a2a;font-weight:bold;transform:scaleX(0.8968);transform-origin:0 0;">0</span>
<span id="t_43" class="tx" style="left:239px;top:213.68px;font-size:9px;color:#bbb;font-weight:normal;transform:scaleX(1.0000);transform-origin:0 0;">-</span>
<span id="t_44" class="tx" style="left:98px;top:233.08px;font-size:8.8px;color:#f4f4f4;font-weight:bold;transform:scaleX(1.0365);transform-origin:0 0;-webkit-text-stroke:.3px #f4f4f4;">MAGIC</span>
<div class="a" style="left:137.8px;top:231px;width:104.69999999999999px;height:13.800000000000011px;background:#efefef;border-radius:2px"></div>
<span id="t_45" class="tx" style="left:180.6px;top:234.18px;font-size:8.8px;color:#2a2a2a;font-weight:bold;transform:scaleX(0.9710);transform-origin:0 0;">1111</span>
<span id="t_46" class="tx" style="left:97.4px;top:252.20px;font-size:10px;color:#f0f0f0;font-weight:normal;transform:scaleX(0.9050);transform-origin:0 0;-webkit-text-stroke:.3px #f0f0f0;">注释</span>
<div class="a" style="left:137.8px;top:251.3px;width:104.69999999999999px;height:15.399999999999977px;background:#efefef;border-radius:2px"></div>
<span id="t_47" class="tx" style="left:175px;top:255.16px;font-size:8px;color:#111;font-weight:normal;transform:scaleX(0.9062);transform-origin:0 0;-webkit-text-stroke:.25px #111;">测试空单</span>
<div class="a" style="left:97.4px;top:275.3px;width:145.1px;height:15.800000000000011px;background:#f2605c;border-radius:2px"></div>
<span id="t_48" class="tx" style="left:137px;top:278.70px;font-size:10px;color:#fff;font-weight:normal;transform:scaleX(0.9762);transform-origin:0 0;-webkit-text-stroke:.25px #fff;">逆势加仓&nbsp;&nbsp;停用</span>
<div class="a" style="left:97.4px;top:323.6px;width:145.1px;height:16.19999999999999px;background:#f2605c;border-radius:2px"></div>
<span id="t_49" class="tx" style="left:137px;top:327.20px;font-size:10px;color:#fff;font-weight:normal;transform:scaleX(0.9762);transform-origin:0 0;-webkit-text-stroke:.25px #fff;">顺势加仓&nbsp;&nbsp;停用</span>
<div class="a" style="left:97.4px;top:299px;width:28.599999999999994px;height:16.30000000000001px;background:#efefef;border-radius:2px"></div>
<div class="a" style="left:146px;top:299px;width:28px;height:16.30000000000001px;background:#efefef;border-radius:2px"></div>
<div class="a" style="left:194px;top:299px;width:28.30000000000001px;height:16.30000000000001px;background:#efefef;border-radius:2px"></div>
<span id="t_50" class="tx" style="left:102.3px;top:303.13px;font-size:9px;color:#151515;font-weight:bold;transform:scaleX(1.0511);transform-origin:0 0;">100</span>
<span id="t_51" class="tx" style="left:152.1px;top:303.13px;font-size:9px;color:#151515;font-weight:bold;transform:scaleX(1.0147);transform-origin:0 0;">1.1</span>
<span id="t_52" class="tx" style="left:201.9px;top:303.13px;font-size:9px;color:#151515;font-weight:bold;transform:scaleX(1.0983);transform-origin:0 0;">10</span>
<span id="t_53" class="tx" style="left:129.5px;top:301.35px;font-size:10px;color:#f0f0f0;font-weight:normal;transform:scaleX(1.0100);transform-origin:0 0;-webkit-text-stroke:.3px #f0f0f0;">点</span>
<span id="t_54" class="tx" style="left:178px;top:301.35px;font-size:10px;color:#f0f0f0;font-weight:normal;transform:scaleX(0.9500);transform-origin:0 0;-webkit-text-stroke:.3px #f0f0f0;">倍</span>
<span id="t_55" class="tx" style="left:226px;top:301.35px;font-size:10px;color:#f0f0f0;font-weight:normal;transform:scaleX(1.0000);transform-origin:0 0;-webkit-text-stroke:.3px #f0f0f0;">次</span>
<div class="a" style="left:97.4px;top:347.3px;width:28.599999999999994px;height:16.399999999999977px;background:#efefef;border-radius:2px"></div>
<div class="a" style="left:146px;top:347.3px;width:28px;height:16.399999999999977px;background:#efefef;border-radius:2px"></div>
<div class="a" style="left:194px;top:347.3px;width:28.30000000000001px;height:16.399999999999977px;background:#efefef;border-radius:2px"></div>
<span id="t_56" class="tx" style="left:102.3px;top:351.48px;font-size:9px;color:#151515;font-weight:bold;transform:scaleX(1.0511);transform-origin:0 0;">100</span>
<span id="t_57" class="tx" style="left:152.1px;top:351.48px;font-size:9px;color:#151515;font-weight:bold;transform:scaleX(1.0147);transform-origin:0 0;">0.9</span>
<span id="t_58" class="tx" style="left:201.9px;top:351.48px;font-size:9px;color:#151515;font-weight:bold;transform:scaleX(1.0983);transform-origin:0 0;">10</span>
<span id="t_59" class="tx" style="left:129.5px;top:349.70px;font-size:10px;color:#f0f0f0;font-weight:normal;transform:scaleX(1.0100);transform-origin:0 0;-webkit-text-stroke:.3px #f0f0f0;">点</span>
<span id="t_60" class="tx" style="left:178px;top:349.70px;font-size:10px;color:#f0f0f0;font-weight:normal;transform:scaleX(0.9500);transform-origin:0 0;-webkit-text-stroke:.3px #f0f0f0;">倍</span>
<span id="t_61" class="tx" style="left:226px;top:349.70px;font-size:10px;color:#f0f0f0;font-weight:normal;transform:scaleX(1.0000);transform-origin:0 0;-webkit-text-stroke:.3px #f0f0f0;">次</span>
<div class="a" style="left:0;top:548.3px;width:1024px;height:21.7px;background:#f0f0f0"></div>
<div class="a" style="left:0;top:548.5px;width:1024px;height:1.3px;background:#fafafa"></div>
<div class="a" style="left:0;top:549.9px;width:1024px;height:1px;background:#252a30"></div>
<span id="t_62" class="tx" style="left:11px;top:553.70px;font-size:10px;color:#8a8a8a;font-weight:normal;transform:scaleX(0.9430);transform-origin:0 0;">USDCAD,H1</span>
<div class="cts" style="left:76px"></div>
<span id="t_63" class="tx" style="left:84px;top:553.70px;font-size:10px;color:#8a8a8a;font-weight:normal;transform:scaleX(0.9443);transform-origin:0 0;">USDCHF,H1</span>
<div class="cts" style="left:147.5px"></div>
<span id="t_64" class="tx" style="left:155px;top:553.70px;font-size:10px;color:#8a8a8a;font-weight:normal;transform:scaleX(0.9959);transform-origin:0 0;">AUDCHF,M5</span>
<div class="cts" style="left:221px"></div>
<span id="t_65" class="tx" style="left:230px;top:553.70px;font-size:10px;color:#8a8a8a;font-weight:normal;transform:scaleX(1.0016);transform-origin:0 0;">USDCAD,M5</span>
<div class="cts" style="left:297.5px"></div>
<span id="t_66" class="tx" style="left:306px;top:553.70px;font-size:10px;color:#8a8a8a;font-weight:normal;transform:scaleX(0.9846);transform-origin:0 0;">GBPUSD,M5</span>
<div class="a" style="left:373px;top:549.9px;width:74px;height:15.8px;background:#fdfdfd;border:1px solid #303030;border-top:none"></div>
<span id="t_67" class="tx" style="left:381px;top:553.70px;font-size:10px;color:#111;font-weight:normal;transform:scaleX(0.9676);transform-origin:0 0;">EURUSD,M5</span>
<span id="t_68" class="tx" style="left:456px;top:553.70px;font-size:10px;color:#8a8a8a;font-weight:normal;transform:scaleX(0.9481);transform-origin:0 0;">USDJPY,M5</span>
<div class="cts" style="left:518.7px"></div>
<span id="t_69" class="tx" style="left:526.7px;top:553.70px;font-size:10px;color:#8a8a8a;font-weight:normal;transform:scaleX(0.9897);transform-origin:0 0;">AUDUSD,M5</span>
<div class="cts" style="left:595.8px"></div>
<svg class="a" style="left:994px;top:551px" width="30" height="12"><path d="M8 4l-2 2 2 2M20.5 4l2 2-2 2" stroke="#a8a8a8" stroke-width="1.2" fill="none"/></svg>
<div class="a" style="left:0;top:569px;width:1024px;height:115px;background:#f3f3f3"></div>
<div class="a" style="left:0;top:569px;width:9px;height:135px;background:#dce8f0"></div>
<span id="t_70" class="tx" style="left:0px;top:569.68px;font-size:9px;color:#333;font-weight:bold;transform:scaleX(1.3294);transform-origin:0 0;">&#x00D7;</span>
<div class="a" style="left:9px;top:569px;width:1000px;height:115px;background:#fdfdfd"></div>
<div class="a" style="left:9px;top:569px;width:1000px;height:1px;background:#d4d4d4"></div>
<div class="a" style="left:9px;top:569px;width:1px;height:115px;background:#c4c4c4"></div>
<div class="a" style="left:10px;top:589px;width:999px;height:1px;background:#e6e6e6"></div>
<div class="a" style="left:10px;top:589.70px;width:998.5px;height:16.7px;background:#0a78d7"></div>
<div class="a" style="left:10px;top:606.35px;width:998.5px;height:16.7px;background:#ebebeb"></div>
<div class="a" style="left:10px;top:623.00px;width:998.5px;height:16.7px;background:#fdfdfd"></div>
<div class="a" style="left:10px;top:639.65px;width:998.5px;height:16.7px;background:#ebebeb"></div>
<div class="a" style="left:10px;top:656.30px;width:998.5px;height:16.7px;background:#fdfdfd"></div>
<div class="a" style="left:10px;top:672.95px;width:998.5px;height:16.7px;background:#ebebeb"></div>
<div class="a" style="left:87.7px;top:570px;width:1px;height:114px;background:#e0e0e0;opacity:.9"></div>
<div class="a" style="left:198.9px;top:570px;width:1px;height:114px;background:#e0e0e0;opacity:.9"></div>
<div class="a" style="left:254.4px;top:570px;width:1px;height:114px;background:#e0e0e0;opacity:.9"></div>
<div class="a" style="left:297.3px;top:570px;width:1px;height:114px;background:#e0e0e0;opacity:.9"></div>
<div class="a" style="left:353.5px;top:570px;width:1px;height:114px;background:#e0e0e0;opacity:.9"></div>
<div class="a" style="left:414.3px;top:570px;width:1px;height:114px;background:#e0e0e0;opacity:.9"></div>
<div class="a" style="left:475.7px;top:570px;width:1px;height:114px;background:#e0e0e0;opacity:.9"></div>
<div class="a" style="left:537.2px;top:570px;width:1px;height:114px;background:#e0e0e0;opacity:.9"></div>
<div class="a" style="left:598.0px;top:570px;width:1px;height:114px;background:#e0e0e0;opacity:.9"></div>
<div class="a" style="left:660.1px;top:570px;width:1px;height:114px;background:#e0e0e0;opacity:.9"></div>
<div class="a" style="left:720.8px;top:570px;width:1px;height:114px;background:#e0e0e0;opacity:.9"></div>
<div class="a" style="left:813.7px;top:570px;width:1px;height:114px;background:#e0e0e0;opacity:.9"></div>
<span id="t_71" class="tx" style="left:14.4px;top:574.72px;font-size:11px;color:#1a1a1a;font-weight:normal;transform:scaleX(0.8818);transform-origin:0 0;">订单</span>
<span id="t_72" class="tx" style="left:177px;top:574.72px;font-size:11px;color:#1a1a1a;font-weight:normal;transform:scaleX(0.8636);transform-origin:0 0;">时间</span>
<span id="t_73" class="tx" style="left:233px;top:574.72px;font-size:11px;color:#1a1a1a;font-weight:normal;transform:scaleX(0.8636);transform-origin:0 0;">类型</span>
<span id="t_74" class="tx" style="left:276px;top:574.72px;font-size:11px;color:#1a1a1a;font-weight:normal;transform:scaleX(0.8636);transform-origin:0 0;">手数</span>
<span id="t_75" class="tx" style="left:305px;top:574.72px;font-size:11px;color:#1a1a1a;font-weight:normal;transform:scaleX(0.9624);transform-origin:0 0;">交易...</span>
<span id="t_76" class="tx" style="left:393px;top:574.72px;font-size:11px;color:#1a1a1a;font-weight:normal;transform:scaleX(0.8636);transform-origin:0 0;">价格</span>
<span id="t_77" class="tx" style="left:454px;top:574.72px;font-size:11px;color:#1a1a1a;font-weight:normal;transform:scaleX(0.8636);transform-origin:0 0;">止损</span>
<span id="t_78" class="tx" style="left:515px;top:574.72px;font-size:11px;color:#1a1a1a;font-weight:normal;transform:scaleX(0.8636);transform-origin:0 0;">止盈</span>
<span id="t_79" class="tx" style="left:578px;top:574.72px;font-size:11px;color:#1a1a1a;font-weight:normal;transform:scaleX(0.8636);transform-origin:0 0;">价格</span>
<span id="t_80" class="tx" style="left:628px;top:574.72px;font-size:11px;color:#1a1a1a;font-weight:normal;transform:scaleX(0.8788);transform-origin:0 0;">手续费</span>
<span id="t_81" class="tx" style="left:689px;top:574.72px;font-size:11px;color:#1a1a1a;font-weight:normal;transform:scaleX(0.8788);transform-origin:0 0;">库存费</span>
<span id="t_82" class="tx" style="left:791px;top:574.72px;font-size:11px;color:#1a1a1a;font-weight:normal;transform:scaleX(0.8636);transform-origin:0 0;">获利</span>
<span id="t_83" class="tx" style="left:984px;top:574.72px;font-size:11px;color:#1a1a1a;font-weight:normal;transform:scaleX(0.8636);transform-origin:0 0;">注释</span>
<span id="t_84" class="tx" style="left:343px;top:576.16px;font-size:8px;color:#999;font-weight:normal;transform:scaleX(1.3427);transform-origin:0 0;">/</span>
<span id="t_85" class="tx" style="left:28px;top:593.16px;font-size:10.5px;color:#fff;font-weight:normal;transform:scaleX(0.9512);transform-origin:0 0;">123549828</span>
<span id="t_86" class="tx" style="left:104.6px;top:593.16px;font-size:10.5px;color:#fff;font-weight:normal;transform:scaleX(0.9487);transform-origin:0 0;">2022.05.18 10:48:20</span>
<span id="t_87" class="tx" style="left:235.5px;top:593.16px;font-size:10.5px;color:#fff;font-weight:normal;transform:scaleX(0.9742);transform-origin:0 0;">buy</span>
<span id="t_88" class="tx" style="left:276.1px;top:593.16px;font-size:10.5px;color:#fff;font-weight:normal;transform:scaleX(0.9492);transform-origin:0 0;">0.20</span>
<span id="t_89" class="tx" style="left:321.1px;top:593.16px;font-size:10.5px;color:#fff;font-weight:normal;transform:scaleX(0.9312);transform-origin:0 0;">eurusd</span>
<span id="t_90" class="tx" style="left:375.8px;top:593.16px;font-size:10.5px;color:#fff;font-weight:normal;transform:scaleX(0.9534);transform-origin:0 0;">1.05175</span>
<span id="t_91" class="tx" style="left:436.8px;top:593.16px;font-size:10.5px;color:#fff;font-weight:normal;transform:scaleX(0.9534);transform-origin:0 0;">1.04976</span>
<span id="t_92" class="tx" style="left:497.8px;top:593.16px;font-size:10.5px;color:#fff;font-weight:normal;transform:scaleX(0.9534);transform-origin:0 0;">1.05376</span>
<span id="t_93" class="tx" style="left:560.3px;top:593.16px;font-size:10.5px;color:#fff;font-weight:normal;transform:scaleX(0.9534);transform-origin:0 0;">1.05172</span>
<span id="t_94" class="tx" style="left:637.6px;top:593.16px;font-size:10.5px;color:#fff;font-weight:normal;transform:scaleX(0.9492);transform-origin:0 0;">0.00</span>
<span id="t_95" class="tx" style="left:698.6px;top:593.16px;font-size:10.5px;color:#fff;font-weight:normal;transform:scaleX(0.9492);transform-origin:0 0;">0.00</span>
<span id="t_96" class="tx" style="left:771.1px;top:593.16px;font-size:10.5px;color:#fff;font-weight:normal;transform:scaleX(0.9567);transform-origin:0 0;">-0.60</span>
<span id="t_97" class="tx" style="left:961.8px;top:592.92px;font-size:11px;color:#fff;font-weight:normal;transform:scaleX(0.9364);transform-origin:0 0;">测试多单</span>
<svg class="a" style="left:802.5px;top:594.7px" width="8" height="8"><path d="M1 1l6 6M7 1l-6 7" stroke="#b8c8d8" stroke-width="1.2"/></svg>
<svg class="a" style="left:12px;top:593.2px" width="13" height="12"><path d="M1.5 .5h6l2.5 2.5v8.5h-8.5z" fill="#fafafa" stroke="#6a6a6a" stroke-width="1"/><circle cx="8.8" cy="9.2" r="2.5" fill="#2a8ae0"/></svg>
<span id="t_98" class="tx" style="left:28px;top:609.76px;font-size:10.5px;color:#1a1a1a;font-weight:normal;transform:scaleX(0.9512);transform-origin:0 0;">123550166</span>
<span id="t_99" class="tx" style="left:104.6px;top:609.76px;font-size:10.5px;color:#1a1a1a;font-weight:normal;transform:scaleX(0.9487);transform-origin:0 0;">2022.05.18 10:52:01</span>
<span id="t_100" class="tx" style="left:237.3px;top:609.76px;font-size:10.5px;color:#1a1a1a;font-weight:normal;transform:scaleX(0.9324);transform-origin:0 0;">sell</span>
<span id="t_101" class="tx" style="left:276.1px;top:609.76px;font-size:10.5px;color:#1a1a1a;font-weight:normal;transform:scaleX(0.9492);transform-origin:0 0;">0.20</span>
<span id="t_102" class="tx" style="left:321.1px;top:609.76px;font-size:10.5px;color:#1a1a1a;font-weight:normal;transform:scaleX(0.9312);transform-origin:0 0;">eurusd</span>
<span id="t_103" class="tx" style="left:375.8px;top:609.76px;font-size:10.5px;color:#1a1a1a;font-weight:normal;transform:scaleX(0.9534);transform-origin:0 0;">1.05151</span>
<span id="t_104" class="tx" style="left:436.8px;top:609.76px;font-size:10.5px;color:#1a1a1a;font-weight:normal;transform:scaleX(0.9534);transform-origin:0 0;">1.05351</span>
<span id="t_105" class="tx" style="left:497.8px;top:609.76px;font-size:10.5px;color:#1a1a1a;font-weight:normal;transform:scaleX(0.9534);transform-origin:0 0;">0.00000</span>
<span id="t_106" class="tx" style="left:560.3px;top:609.76px;font-size:10.5px;color:#1a1a1a;font-weight:normal;transform:scaleX(0.9534);transform-origin:0 0;">1.05189</span>
<span id="t_107" class="tx" style="left:637.6px;top:609.76px;font-size:10.5px;color:#1a1a1a;font-weight:normal;transform:scaleX(0.9492);transform-origin:0 0;">0.00</span>
<span id="t_108" class="tx" style="left:698.6px;top:609.76px;font-size:10.5px;color:#1a1a1a;font-weight:normal;transform:scaleX(0.9492);transform-origin:0 0;">0.00</span>
<span id="t_109" class="tx" style="left:771.1px;top:609.76px;font-size:10.5px;color:#1a1a1a;font-weight:normal;transform:scaleX(0.9567);transform-origin:0 0;">-7.60</span>
<span id="t_110" class="tx" style="left:961.8px;top:609.52px;font-size:11px;color:#1a1a1a;font-weight:normal;transform:scaleX(0.9364);transform-origin:0 0;">测试空单</span>
<svg class="a" style="left:802.5px;top:611.3px" width="8" height="8"><path d="M1 1l6 6M7 1l-6 7" stroke="#a0a0a0" stroke-width="1.2"/></svg>
<svg class="a" style="left:12px;top:609.8px" width="13" height="12"><path d="M1.5 .5h6l2.5 2.5v8.5h-8.5z" fill="#fafafa" stroke="#6a6a6a" stroke-width="1"/><circle cx="8.8" cy="9.2" r="2.5" fill="#e03a1a"/></svg>
<span id="t_111" class="tx" style="left:28px;top:626.36px;font-size:10.5px;color:#1a1a1a;font-weight:normal;transform:scaleX(0.9512);transform-origin:0 0;">123470429</span>
<span id="t_112" class="tx" style="left:104.6px;top:626.36px;font-size:10.5px;color:#1a1a1a;font-weight:normal;transform:scaleX(0.9487);transform-origin:0 0;">2022.05.17 18:21:39</span>
<span id="t_113" class="tx" style="left:237.3px;top:626.36px;font-size:10.5px;color:#1a1a1a;font-weight:normal;transform:scaleX(0.9324);transform-origin:0 0;">sell</span>
<span id="t_114" class="tx" style="left:276.1px;top:626.36px;font-size:10.5px;color:#1a1a1a;font-weight:normal;transform:scaleX(0.9492);transform-origin:0 0;">1.00</span>
<span id="t_115" class="tx" style="left:318.9px;top:626.36px;font-size:10.5px;color:#1a1a1a;font-weight:normal;transform:scaleX(0.9317);transform-origin:0 0;">gbpusd</span>
<span id="t_116" class="tx" style="left:375.8px;top:626.36px;font-size:10.5px;color:#1a1a1a;font-weight:normal;transform:scaleX(0.9534);transform-origin:0 0;">1.24603</span>
<span id="t_117" class="tx" style="left:436.8px;top:626.36px;font-size:10.5px;color:#1a1a1a;font-weight:normal;transform:scaleX(0.9534);transform-origin:0 0;">0.00000</span>
<span id="t_118" class="tx" style="left:497.8px;top:626.36px;font-size:10.5px;color:#1a1a1a;font-weight:normal;transform:scaleX(0.9534);transform-origin:0 0;">0.00000</span>
<span id="t_119" class="tx" style="left:560.3px;top:626.36px;font-size:10.5px;color:#1a1a1a;font-weight:normal;transform:scaleX(0.9534);transform-origin:0 0;">1.24083</span>
<span id="t_120" class="tx" style="left:637.6px;top:626.36px;font-size:10.5px;color:#1a1a1a;font-weight:normal;transform:scaleX(0.9492);transform-origin:0 0;">0.00</span>
<span id="t_121" class="tx" style="left:695.1px;top:626.36px;font-size:10.5px;color:#1a1a1a;font-weight:normal;transform:scaleX(0.9567);transform-origin:0 0;">-3.63</span>
<span id="t_122" class="tx" style="left:763.4px;top:626.36px;font-size:10.5px;color:#1a1a1a;font-weight:normal;transform:scaleX(0.9525);transform-origin:0 0;">520.00</span>
<svg class="a" style="left:802.5px;top:627.9px" width="8" height="8"><path d="M1 1l6 6M7 1l-6 7" stroke="#a0a0a0" stroke-width="1.2"/></svg>
<svg class="a" style="left:12px;top:626.4px" width="13" height="12"><path d="M1.5 .5h6l2.5 2.5v8.5h-8.5z" fill="#fafafa" stroke="#6a6a6a" stroke-width="1"/><circle cx="8.8" cy="9.2" r="2.5" fill="#e03a1a"/></svg>
<span id="t_123" class="tx" style="left:28px;top:642.96px;font-size:10.5px;color:#1a1a1a;font-weight:normal;transform:scaleX(0.9512);transform-origin:0 0;">123476614</span>
<span id="t_124" class="tx" style="left:104.6px;top:642.96px;font-size:10.5px;color:#1a1a1a;font-weight:normal;transform:scaleX(0.9487);transform-origin:0 0;">2022.05.17 19:09:58</span>
<span id="t_125" class="tx" style="left:237.3px;top:642.96px;font-size:10.5px;color:#1a1a1a;font-weight:normal;transform:scaleX(0.9324);transform-origin:0 0;">sell</span>
<span id="t_126" class="tx" style="left:276.1px;top:642.96px;font-size:10.5px;color:#1a1a1a;font-weight:normal;transform:scaleX(0.9492);transform-origin:0 0;">2.00</span>
<span id="t_127" class="tx" style="left:318.9px;top:642.96px;font-size:10.5px;color:#1a1a1a;font-weight:normal;transform:scaleX(0.9317);transform-origin:0 0;">gbpusd</span>
<span id="t_128" class="tx" style="left:375.8px;top:642.96px;font-size:10.5px;color:#1a1a1a;font-weight:normal;transform:scaleX(0.9534);transform-origin:0 0;">1.24737</span>
<span id="t_129" class="tx" style="left:436.8px;top:642.96px;font-size:10.5px;color:#1a1a1a;font-weight:normal;transform:scaleX(0.9534);transform-origin:0 0;">0.00000</span>
<span id="t_130" class="tx" style="left:497.8px;top:642.96px;font-size:10.5px;color:#1a1a1a;font-weight:normal;transform:scaleX(0.9534);transform-origin:0 0;">0.00000</span>
<span id="t_131" class="tx" style="left:560.3px;top:642.96px;font-size:10.5px;color:#1a1a1a;font-weight:normal;transform:scaleX(0.9534);transform-origin:0 0;">1.24083</span>
<span id="t_132" class="tx" style="left:637.6px;top:642.96px;font-size:10.5px;color:#1a1a1a;font-weight:normal;transform:scaleX(0.9492);transform-origin:0 0;">0.00</span>
<span id="t_133" class="tx" style="left:695.1px;top:642.96px;font-size:10.5px;color:#1a1a1a;font-weight:normal;transform:scaleX(0.9567);transform-origin:0 0;">-7.26</span>
<span id="t_134" class="tx" style="left:755.2px;top:642.96px;font-size:10.5px;color:#1a1a1a;font-weight:normal;transform:scaleX(0.9492);transform-origin:0 0;">1 308.00</span>
<svg class="a" style="left:802.5px;top:644.5px" width="8" height="8"><path d="M1 1l6 6M7 1l-6 7" stroke="#a0a0a0" stroke-width="1.2"/></svg>
<svg class="a" style="left:12px;top:643.0px" width="13" height="12"><path d="M1.5 .5h6l2.5 2.5v8.5h-8.5z" fill="#fafafa" stroke="#6a6a6a" stroke-width="1"/><circle cx="8.8" cy="9.2" r="2.5" fill="#e03a1a"/></svg>
<span id="t_135" class="tx" style="left:28px;top:659.56px;font-size:10.5px;color:#1a1a1a;font-weight:normal;transform:scaleX(0.9512);transform-origin:0 0;">123510305</span>
<span id="t_136" class="tx" style="left:104.6px;top:659.56px;font-size:10.5px;color:#1a1a1a;font-weight:normal;transform:scaleX(0.9564);transform-origin:0 0;">2022.05.18 03:37:11</span>
<span id="t_137" class="tx" style="left:237.3px;top:659.56px;font-size:10.5px;color:#1a1a1a;font-weight:normal;transform:scaleX(0.9324);transform-origin:0 0;">sell</span>
<span id="t_138" class="tx" style="left:276.1px;top:659.56px;font-size:10.5px;color:#1a1a1a;font-weight:normal;transform:scaleX(0.9492);transform-origin:0 0;">3.00</span>
<span id="t_139" class="tx" style="left:318.9px;top:659.56px;font-size:10.5px;color:#1a1a1a;font-weight:normal;transform:scaleX(0.9317);transform-origin:0 0;">gbpusd</span>
<span id="t_140" class="tx" style="left:375.8px;top:659.56px;font-size:10.5px;color:#1a1a1a;font-weight:normal;transform:scaleX(0.9534);transform-origin:0 0;">1.24907</span>
<span id="t_141" class="tx" style="left:436.8px;top:659.56px;font-size:10.5px;color:#1a1a1a;font-weight:normal;transform:scaleX(0.9534);transform-origin:0 0;">0.00000</span>
<span id="t_142" class="tx" style="left:497.8px;top:659.56px;font-size:10.5px;color:#1a1a1a;font-weight:normal;transform:scaleX(0.9534);transform-origin:0 0;">0.00000</span>
<span id="t_143" class="tx" style="left:560.3px;top:659.56px;font-size:10.5px;color:#1a1a1a;font-weight:normal;transform:scaleX(0.9534);transform-origin:0 0;">1.24083</span>
<span id="t_144" class="tx" style="left:637.6px;top:659.56px;font-size:10.5px;color:#1a1a1a;font-weight:normal;transform:scaleX(0.9492);transform-origin:0 0;">0.00</span>
<span id="t_145" class="tx" style="left:698.6px;top:659.56px;font-size:10.5px;color:#1a1a1a;font-weight:normal;transform:scaleX(0.9492);transform-origin:0 0;">0.00</span>
<span id="t_146" class="tx" style="left:755.2px;top:659.56px;font-size:10.5px;color:#1a1a1a;font-weight:normal;transform:scaleX(0.9492);transform-origin:0 0;">2 472.00</span>
<svg class="a" style="left:802.5px;top:661.1px" width="8" height="8"><path d="M1 1l6 6M7 1l-6 7" stroke="#a0a0a0" stroke-width="1.2"/></svg>
<svg class="a" style="left:12px;top:659.6px" width="13" height="12"><path d="M1.5 .5h6l2.5 2.5v8.5h-8.5z" fill="#fafafa" stroke="#6a6a6a" stroke-width="1"/><circle cx="8.8" cy="9.2" r="2.5" fill="#e03a1a"/></svg>
<span id="t_147" class="tx" style="left:28px;top:676.16px;font-size:10.5px;color:#1a1a1a;font-weight:normal;transform:scaleX(0.9512);transform-origin:0 0;">123470183</span>
<span id="t_148" class="tx" style="left:104.6px;top:676.16px;font-size:10.5px;color:#1a1a1a;font-weight:normal;transform:scaleX(0.9487);transform-origin:0 0;">2022.05.17 18:20:12</span>
<span id="t_149" class="tx" style="left:237.3px;top:676.16px;font-size:10.5px;color:#1a1a1a;font-weight:normal;transform:scaleX(0.9324);transform-origin:0 0;">sell</span>
<span id="t_150" class="tx" style="left:276.1px;top:676.16px;font-size:10.5px;color:#1a1a1a;font-weight:normal;transform:scaleX(0.9492);transform-origin:0 0;">1.00</span>
<span id="t_151" class="tx" style="left:318.9px;top:676.16px;font-size:10.5px;color:#1a1a1a;font-weight:normal;transform:scaleX(0.9480);transform-origin:0 0;">usdcad</span>
<span id="t_152" class="tx" style="left:375.8px;top:676.16px;font-size:10.5px;color:#1a1a1a;font-weight:normal;transform:scaleX(0.9534);transform-origin:0 0;">1.28428</span>
<span id="t_153" class="tx" style="left:436.8px;top:676.16px;font-size:10.5px;color:#1a1a1a;font-weight:normal;transform:scaleX(0.9534);transform-origin:0 0;">0.00000</span>
<span id="t_154" class="tx" style="left:497.8px;top:676.16px;font-size:10.5px;color:#1a1a1a;font-weight:normal;transform:scaleX(0.9534);transform-origin:0 0;">0.00000</span>
<span id="t_155" class="tx" style="left:560.3px;top:676.16px;font-size:10.5px;color:#1a1a1a;font-weight:normal;transform:scaleX(0.9534);transform-origin:0 0;">1.28363</span>
<span id="t_156" class="tx" style="left:637.6px;top:676.16px;font-size:10.5px;color:#1a1a1a;font-weight:normal;transform:scaleX(0.9492);transform-origin:0 0;">0.00</span>
<span id="t_157" class="tx" style="left:695.1px;top:676.16px;font-size:10.5px;color:#1a1a1a;font-weight:normal;transform:scaleX(0.9567);transform-origin:0 0;">-2.58</span>
<span id="t_158" class="tx" style="left:769.0px;top:676.16px;font-size:10.5px;color:#1a1a1a;font-weight:normal;transform:scaleX(0.9512);transform-origin:0 0;">50.64</span>
<svg class="a" style="left:802.5px;top:677.7px" width="8" height="8"><path d="M1 1l6 6M7 1l-6 7" stroke="#a0a0a0" stroke-width="1.2"/></svg>
<svg class="a" style="left:12px;top:676.2px" width="13" height="12"><path d="M1.5 .5h6l2.5 2.5v8.5h-8.5z" fill="#fafafa" stroke="#6a6a6a" stroke-width="1"/><circle cx="8.8" cy="9.2" r="2.5" fill="#e03a1a"/></svg>
<div class="a" style="left:1008.5px;top:570px;width:13px;height:114px;background:#f0f0f0"></div>
<div class="a" style="left:1009.5px;top:584px;width:11.5px;height:54px;background:#cdcdcd"></div>
<svg class="a" style="left:1009px;top:572px" width="12" height="112"><path d="M2.5 8l3.5-3.5 3.5 3.5" stroke="#606060" stroke-width="1.2" fill="none"/><path d="M2.5 103.5l3.5 3.5 3.5-3.5" stroke="#606060" stroke-width="1.2" fill="none"/></svg>
<div class="a" style="left:9px;top:684px;width:1015px;height:20px;background:#f0f0f0"></div>
<div class="a" style="left:0;top:684px;width:1024px;height:1px;background:#1e1e1e"></div>
<div class="a" style="left:11px;top:685px;width:36px;height:16.5px;background:#fdfdfd;border:1px solid #303030;border-top:none"></div>
<span id="t_159" class="tx" style="left:20px;top:687.72px;font-size:11px;color:#111;font-weight:normal;transform:scaleX(0.7955);transform-origin:0 0;">交易</span>
<span id="t_160" class="tx" style="left:54.5px;top:687.72px;font-size:11px;color:#8a8a8a;font-weight:normal;transform:scaleX(0.9091);transform-origin:0 0;">展示</span>
<div class="bts" style="left:82.5px"></div>
<span id="t_161" class="tx" style="left:90px;top:687.72px;font-size:11px;color:#8a8a8a;font-weight:normal;transform:scaleX(0.8864);transform-origin:0 0;">账户历史</span>
<div class="bts" style="left:137.5px"></div>
<span id="t_162" class="tx" style="left:145px;top:687.72px;font-size:11px;color:#8a8a8a;font-weight:normal;transform:scaleX(0.8636);transform-origin:0 0;">新闻</span>
<div class="bts" style="left:173px"></div>
<span id="t_163" class="tx" style="left:180.5px;top:687.72px;font-size:11px;color:#8a8a8a;font-weight:normal;transform:scaleX(0.8864);transform-origin:0 0;">警报</span>
<div class="bts" style="left:208px"></div>
<span id="t_164" class="tx" style="left:216px;top:687.72px;font-size:11px;color:#8a8a8a;font-weight:normal;transform:scaleX(0.8636);transform-origin:0 0;">邮箱</span>
<div class="bts" style="left:244px"></div>
<span id="t_165" class="tx" style="left:252px;top:687.72px;font-size:11px;color:#8a8a8a;font-weight:normal;transform:scaleX(0.8636);transform-origin:0 0;">市场</span>
<div class="bts" style="left:295px"></div>
<span id="t_166" class="tx" style="left:303px;top:687.72px;font-size:11px;color:#8a8a8a;font-weight:normal;transform:scaleX(0.8455);transform-origin:0 0;">信号</span>
<div class="bts" style="left:332px"></div>
<span id="t_167" class="tx" style="left:340px;top:687.72px;font-size:11px;color:#8a8a8a;font-weight:normal;transform:scaleX(0.8182);transform-origin:0 0;">文章</span>
<div class="bts" style="left:366.6px"></div>
<span id="t_168" class="tx" style="left:375px;top:687.72px;font-size:11px;color:#8a8a8a;font-weight:normal;transform:scaleX(0.8333);transform-origin:0 0;">代码库</span>
<div class="bts" style="left:411.4px"></div>
<span id="t_169" class="tx" style="left:419px;top:687.72px;font-size:11px;color:#8a8a8a;font-weight:normal;transform:scaleX(0.8170);transform-origin:0 0;">EA</span>
<div class="bts" style="left:439.7px"></div>
<span id="t_170" class="tx" style="left:448px;top:687.72px;font-size:11px;color:#8a8a8a;font-weight:normal;transform:scaleX(0.8636);transform-origin:0 0;">日志</span>
<div class="bts" style="left:475.5px"></div>
<span id="t_171" class="tx" style="left:272px;top:692.92px;font-size:8.5px;color:#e02020;font-weight:bold;transform:scaleX(0.9868);transform-origin:0 0;">120</span>
<svg class="a" style="left:0;top:680px" width="9" height="24"><path d="M1 3h7M1 6h7M1 9h7M2 13h6M1 16h7M2 19.5h6M1 22h7" stroke="#3a4450" stroke-width="1.2"/></svg>
<div class="a" style="left:0;top:704px;width:1024px;height:22px;background:#eeeeee"></div>
<div class="a" style="left:0;top:705.5px;width:1024px;height:1px;background:#d0d0d0"></div>
<span id="t_172" class="tx" style="left:0px;top:710.72px;font-size:11px;color:#1a1a1a;font-weight:normal;transform:scaleX(0.8557);transform-origin:0 0;">寻求帮助,请按F1键</span>
<div class="sts" style="left:368px"></div>
<div class="sts" style="left:477px"></div>
<div class="sts" style="left:571.5px"></div>
<div class="sts" style="left:637.5px"></div>
<div class="sts" style="left:702.8px"></div>
<div class="sts" style="left:765.6px"></div>
<div class="sts" style="left:830px"></div>
<div class="sts" style="left:893px"></div>
<span id="t_173" class="tx" style="left:372.5px;top:710.96px;font-size:10.5px;color:#1a1a1a;font-weight:normal;transform:scaleX(0.9915);transform-origin:0 0;">Default</span>
<svg class="a" style="left:897px;top:710.5px" width="20" height="13"><path d="M1.0 1V10.0" stroke="#a08040" stroke-width="1.4"/><path d="M1.0 10.0V12" stroke="#1a4aa0" stroke-width="1.4"/><path d="M3.4 1V8.8" stroke="#a08040" stroke-width="1.4"/><path d="M3.4 8.8V12" stroke="#1a4aa0" stroke-width="1.4"/><path d="M5.8 1V7.6" stroke="#a08040" stroke-width="1.4"/><path d="M5.8 7.6V12" stroke="#1a4aa0" stroke-width="1.4"/><path d="M8.2 1V6.4" stroke="#a08040" stroke-width="1.4"/><path d="M8.2 6.4V12" stroke="#1a4aa0" stroke-width="1.4"/><path d="M10.6 1V5.2" stroke="#a08040" stroke-width="1.4"/><path d="M10.6 5.2V12" stroke="#1a4aa0" stroke-width="1.4"/><path d="M13.0 1V4.0" stroke="#a08040" stroke-width="1.4"/><path d="M13.0 4.0V12" stroke="#1a4aa0" stroke-width="1.4"/><path d="M15.4 1V2.8" stroke="#a08040" stroke-width="1.4"/><path d="M15.4 2.8V12" stroke="#1a4aa0" stroke-width="1.4"/><path d="M17.8 1V1.6" stroke="#a08040" stroke-width="1.4"/><path d="M17.8 1.6V12" stroke="#1a4aa0" stroke-width="1.4"/></svg>
<span id="t_174" class="tx" style="left:919px;top:710.96px;font-size:10.5px;color:#1a1a1a;font-weight:normal;transform:scaleX(1.0032);transform-origin:0 0;">25742/25 kb</span>
<svg class="a" style="left:1012px;top:714px" width="12" height="12"><path d="M11 3L3 11M11 7L7 11" stroke="#999" stroke-width="1"/></svg>
</body></html>
